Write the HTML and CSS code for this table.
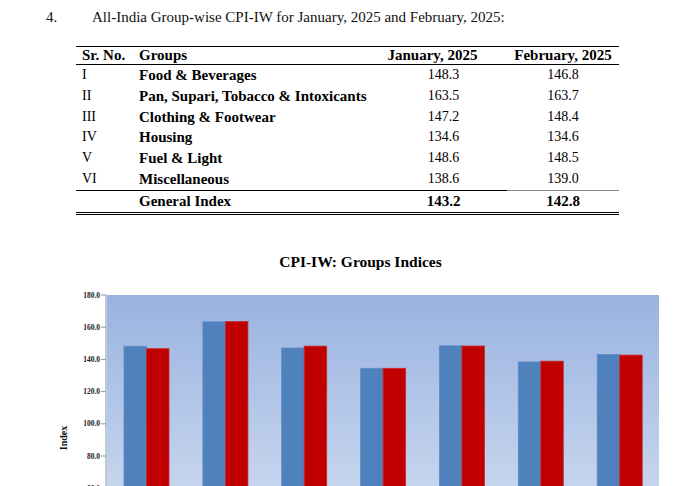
FILE: index.html
```html
<!DOCTYPE html>
<html lang="en">
<head>
<meta charset="utf-8">
<title>CPI-IW Groups</title>
<link rel="stylesheet" href="styles.css">
</head>
<body>
<div class="page">
  <p class="item"><span class="item-no">4.</span><span class="item-text">All-India Group-wise CPI-IW for January, 2025 and February, 2025:</span></p>

  <table class="cpi">
    <thead>
      <tr>
        <th class="c-sr">Sr. No.</th>
        <th class="c-grp">Groups</th>
        <th class="c-jan">January, 2025</th>
        <th class="c-feb">February, 2025</th>
      </tr>
    </thead>
    <tbody>
      <tr><td class="c-sr">I</td><td class="c-grp">Food &amp; Beverages</td><td class="c-val">148.3</td><td class="c-val">146.8</td></tr>
      <tr><td class="c-sr">II</td><td class="c-grp">Pan, Supari, Tobacco &amp; Intoxicants</td><td class="c-val">163.5</td><td class="c-val">163.7</td></tr>
      <tr><td class="c-sr">III</td><td class="c-grp">Clothing &amp; Footwear</td><td class="c-val">147.2</td><td class="c-val">148.4</td></tr>
      <tr><td class="c-sr">IV</td><td class="c-grp">Housing</td><td class="c-val">134.6</td><td class="c-val">134.6</td></tr>
      <tr><td class="c-sr">V</td><td class="c-grp">Fuel &amp; Light</td><td class="c-val">148.6</td><td class="c-val">148.5</td></tr>
      <tr><td class="c-sr">VI</td><td class="c-grp">Miscellaneous</td><td class="c-val">138.6</td><td class="c-val">139.0</td></tr>
      <tr class="total"><td class="c-sr"></td><td class="c-grp">General Index</td><td class="c-val">143.2</td><td class="c-val c-last">142.8</td></tr>
    </tbody>
  </table>

  <section class="chart">
    <h2 class="chart-title">CPI-IW: Groups Indices</h2>
    <svg class="chart-svg" width="698" height="320" viewBox="0 0 698 320" xmlns="http://www.w3.org/2000/svg">
      <defs>
        <linearGradient id="plotbg" x1="0" y1="0" x2="0" y2="1">
          <stop offset="0" stop-color="#99b3e0"/>
          <stop offset="1" stop-color="#dde6f5"/>
        </linearGradient>
      </defs>
      <rect x="107" y="24" width="552" height="290" fill="url(#plotbg)"/>
      <line x1="106" y1="24" x2="106" y2="314" stroke="#9aa4b4" stroke-width="1.2"/>
      <g class="ticks" stroke="#8f98a6" stroke-width="1">
        <line x1="101" y1="24" x2="106" y2="24"/>
        <line x1="101" y1="56.2" x2="106" y2="56.2"/>
        <line x1="101" y1="88.4" x2="106" y2="88.4"/>
        <line x1="101" y1="120.6" x2="106" y2="120.6"/>
        <line x1="101" y1="152.8" x2="106" y2="152.8"/>
        <line x1="101" y1="185" x2="106" y2="185"/>
        <line x1="101" y1="217.2" x2="106" y2="217.2"/>
      </g>
      <g class="tick-labels">
        <text x="100" y="26.5">180.0</text>
        <text x="100" y="58.7">160.0</text>
        <text x="100" y="90.9">140.0</text>
        <text x="100" y="123.1">120.0</text>
        <text x="100" y="155.3">100.0</text>
        <text x="100" y="187.5">80.0</text>
        <text x="100" y="219.7">60.0</text>
      </g>
      <text class="axis-title" transform="translate(67 167) rotate(-90)">Index</text>
      <g class="bars-jan" fill="#4f81bd" stroke="#5d8cc6" stroke-width="0.8">
        <rect x="124" y="75.2" width="22.5" height="238.8"/>
        <rect x="202.9" y="50.8" width="22.5" height="263.2"/>
        <rect x="281.7" y="77" width="22.5" height="237"/>
        <rect x="360.6" y="97.3" width="22.5" height="216.7"/>
        <rect x="439.4" y="74.8" width="22.5" height="239.2"/>
        <rect x="518.3" y="90.9" width="22.5" height="223.1"/>
        <rect x="597.2" y="83.5" width="22.5" height="230.5"/>
      </g>
      <g class="bars-feb" fill="#c00000" stroke="#c8282c" stroke-width="0.8">
        <rect x="146.5" y="77.7" width="22.5" height="236.3"/>
        <rect x="225.4" y="50.5" width="22.5" height="263.5"/>
        <rect x="304.2" y="75.1" width="22.5" height="238.9"/>
        <rect x="383.1" y="97.3" width="22.5" height="216.7"/>
        <rect x="461.9" y="75" width="22.5" height="239"/>
        <rect x="540.8" y="90.2" width="22.5" height="223.8"/>
        <rect x="619.7" y="84.1" width="22.5" height="229.9"/>
      </g>
    </svg>
  </section>
</div>
</body>
</html>
```

FILE: styles.css
```css
html, body {
  margin: 0;
  padding: 0;
  background: #ffffff;
}

body {
  font-family: "Liberation Serif", "Times New Roman", serif;
  color: #000000;
  overflow: hidden;
}

.page {
  width: 698px;
  height: 486px;
  overflow: hidden;
}

.item {
  margin: 0;
  padding: 9px 0 0 46px;
  font-size: 15px;
  line-height: 17px;
  display: flex;
  color: #111111;
}

.item-no {
  width: 46px;
  flex: none;
}

.cpi {
  margin: 20px 0 0 76px;
  width: 543px;
  border-collapse: collapse;
  table-layout: fixed;
  border-top: 1px solid #000000;
  border-bottom: 3px double #000000;
  font-size: 15px;
}

.cpi th, .cpi td {
  padding: 0;
  white-space: nowrap;
}

.cpi thead tr {
  height: 17px;
  line-height: 17px;
  border-bottom: 1px solid #000000;
}

.cpi th {
  font-weight: bold;
  text-align: left;
}

.cpi tbody tr {
  height: 20.8px;
  line-height: 20.8px;
}

.c-sr {
  width: 57px;
  padding-left: 6px !important;
  box-sizing: border-box;
}

td.c-sr {
  font-size: 14px;
}

.c-grp {
  width: 247px;
  padding-left: 6px !important;
  box-sizing: border-box;
}

td.c-grp {
  font-weight: bold;
}

.cpi th.c-jan {
  width: 127px;
  text-align: center;
  padding-right: 22px;
  box-sizing: border-box;
}

.cpi th.c-feb {
  width: 112px;
  text-align: center;
}

.c-val {
  text-align: center;
  font-size: 14px;
}

.total td {
  border-top: 1px solid #000000;
  font-weight: bold;
}

.total td.c-val {
  font-size: 15px;
}

.total td.c-last {
  border-top-color: #8a8a8a;
}

.chart {
  margin-top: 38px;
}

.chart-title {
  margin: 0 0 0 50px;
  width: 621px;
  text-align: center;
  font-size: 15.5px;
  line-height: 18px;
  font-weight: bold;
}

.chart-svg {
  display: block;
}

.tick-labels text {
  font-family: "Liberation Serif", serif;
  font-size: 7.5px;
  font-weight: bold;
  fill: #222222;
  text-anchor: end;
}

.axis-title {
  font-family: "Liberation Serif", serif;
  font-size: 10px;
  font-weight: bold;
  fill: #111111;
  text-anchor: middle;
}
```
